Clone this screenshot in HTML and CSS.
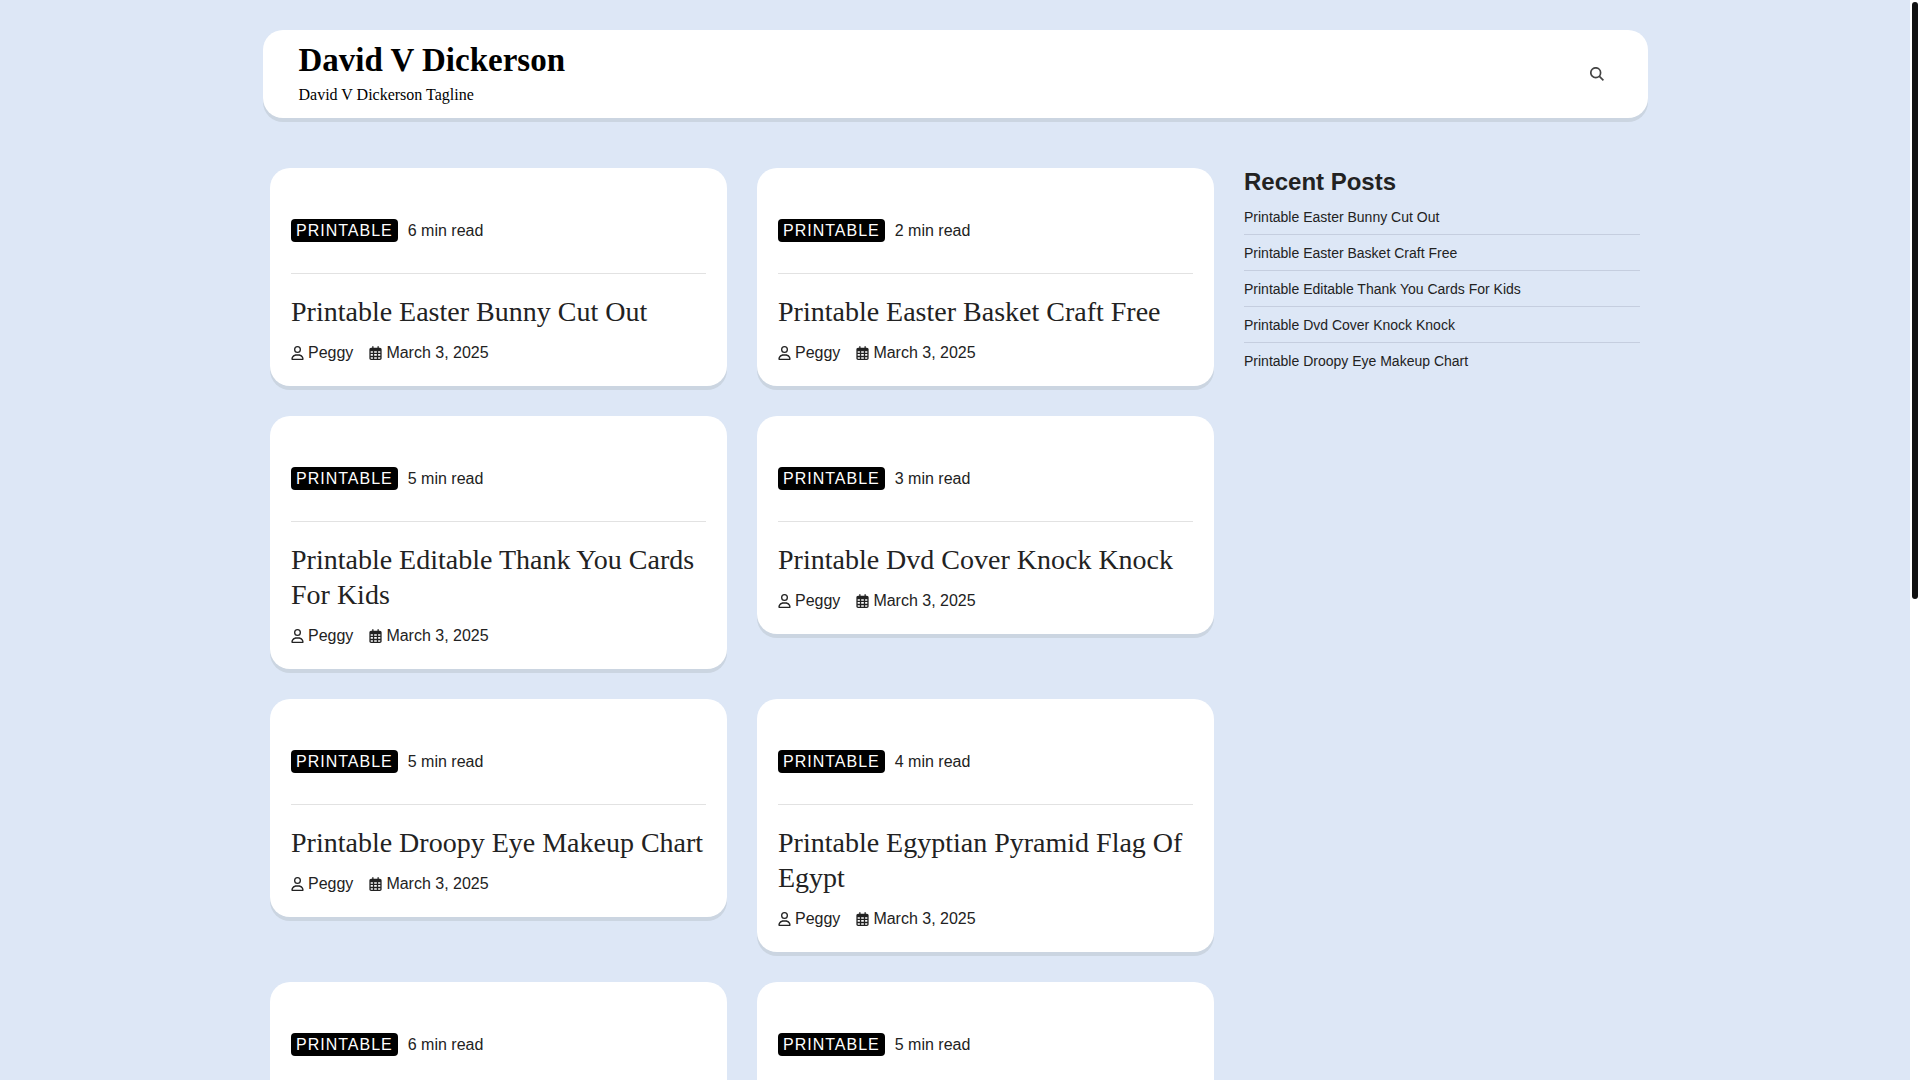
FILE: index.html
```
<!DOCTYPE html>
<html lang="en">
<head>
<meta charset="utf-8">
<meta name="viewport" content="width=device-width, initial-scale=1">
<title>David V Dickerson</title>
<link rel="stylesheet" href="styles.css">
</head>
<body>
<svg class="sprite" aria-hidden="true">
  <symbol id="user" viewBox="0 0 448 512"><path d="M304 128a80 80 0 1 0-160 0 80 80 0 1 0 160 0zM96 128a128 128 0 1 1 256 0A128 128 0 1 1 96 128zM49.3 464H398.7c-8.9-63.3-63.3-112-129-112H178.3c-65.7 0-120.1 48.7-129 112zM0 482.3C0 383.8 79.8 304 178.3 304h91.4C368.2 304 448 383.8 448 482.3c0 16.4-13.3 29.7-29.7 29.7H29.7C13.3 512 0 498.7 0 482.3z"/></symbol>
  <symbol id="calendar" viewBox="0 0 448 512"><path d="M152 24c0-13.3-10.7-24-24-24s-24 10.7-24 24V64H64C28.7 64 0 92.7 0 128v16 48V448c0 35.3 28.7 64 64 64H384c35.3 0 64-28.7 64-64V192 144 128c0-35.3-28.7-64-64-64H344V24c0-13.3-10.7-24-24-24s-24 10.7-24 24V64H152V24zM48 192h80v56H48V192zm0 104h80v64H48V296zm128 0h96v64H176V296zm144 0h80v64H320V296zm80-48H320V192h80v56zm0 160v40c0 8.8-7.2 16-16 16H320V408h80zm-128 0v56H176V408h96zm-144 0v56H64c-8.8 0-16-7.2-16-16V408h80zM272 248H176V192h96v56z"/></symbol>
</svg>
<div class="viewport">
  <div class="page">
    <header class="site-header">
      <div class="branding">
        <h1 class="site-title"><a href="#">David V Dickerson</a></h1>
        <p class="tagline">David V Dickerson Tagline</p>
      </div>
      <button class="search" type="button" aria-label="Search">
        <svg viewBox="0 0 14 14" width="14" height="14"><circle cx="5.7" cy="5.7" r="4.9"/><path d="M9.2 9.2l4.2 4.2"/></svg>
      </button>
    </header>
    <div class="content">
      <main class="posts">
        <article class="card">
          <div class="card-top"><a class="badge" href="#">PRINTABLE</a><span>6 min read</span></div>
          <h2 class="card-title"><a href="#">Printable Easter Bunny Cut Out</a></h2>
          <div class="meta"><a href="#"><svg><use href="#user"/></svg>Peggy</a><a href="#"><svg><use href="#calendar"/></svg>March 3, 2025</a></div>
        </article>
        <article class="card">
          <div class="card-top"><a class="badge" href="#">PRINTABLE</a><span>2 min read</span></div>
          <h2 class="card-title"><a href="#">Printable Easter Basket Craft Free</a></h2>
          <div class="meta"><a href="#"><svg><use href="#user"/></svg>Peggy</a><a href="#"><svg><use href="#calendar"/></svg>March 3, 2025</a></div>
        </article>
        <article class="card">
          <div class="card-top"><a class="badge" href="#">PRINTABLE</a><span>5 min read</span></div>
          <h2 class="card-title"><a href="#">Printable Editable Thank You Cards For Kids</a></h2>
          <div class="meta"><a href="#"><svg><use href="#user"/></svg>Peggy</a><a href="#"><svg><use href="#calendar"/></svg>March 3, 2025</a></div>
        </article>
        <article class="card">
          <div class="card-top"><a class="badge" href="#">PRINTABLE</a><span>3 min read</span></div>
          <h2 class="card-title"><a href="#">Printable Dvd Cover Knock Knock</a></h2>
          <div class="meta"><a href="#"><svg><use href="#user"/></svg>Peggy</a><a href="#"><svg><use href="#calendar"/></svg>March 3, 2025</a></div>
        </article>
        <article class="card">
          <div class="card-top"><a class="badge" href="#">PRINTABLE</a><span>5 min read</span></div>
          <h2 class="card-title"><a href="#">Printable Droopy Eye Makeup Chart</a></h2>
          <div class="meta"><a href="#"><svg><use href="#user"/></svg>Peggy</a><a href="#"><svg><use href="#calendar"/></svg>March 3, 2025</a></div>
        </article>
        <article class="card">
          <div class="card-top"><a class="badge" href="#">PRINTABLE</a><span>4 min read</span></div>
          <h2 class="card-title"><a href="#">Printable Egyptian Pyramid Flag Of Egypt</a></h2>
          <div class="meta"><a href="#"><svg><use href="#user"/></svg>Peggy</a><a href="#"><svg><use href="#calendar"/></svg>March 3, 2025</a></div>
        </article>
        <article class="card">
          <div class="card-top"><a class="badge" href="#">PRINTABLE</a><span>6 min read</span></div>
        </article>
        <article class="card">
          <div class="card-top"><a class="badge" href="#">PRINTABLE</a><span>5 min read</span></div>
        </article>
      </main>
      <aside class="sidebar">
        <h2 class="widget-title">Recent Posts</h2>
        <ul class="recent">
          <li><a href="#">Printable Easter Bunny Cut Out</a></li>
          <li><a href="#">Printable Easter Basket Craft Free</a></li>
          <li><a href="#">Printable Editable Thank You Cards For Kids</a></li>
          <li><a href="#">Printable Dvd Cover Knock Knock</a></li>
          <li><a href="#">Printable Droopy Eye Makeup Chart</a></li>
        </ul>
      </aside>
    </div>
  </div>
  <div class="scroll-track" aria-hidden="true"><div class="scroll-thumb"></div></div>
</div>
</body>
</html>
```
FILE: styles.css
```
* {
  box-sizing: border-box;
}

body {
  margin: 0;
  background: #dde7f6;
  color: #222;
  font: 16px/24px "Liberation Sans", Arial, sans-serif;
}

h1, h2, p, ul {
  margin: 0;
  padding: 0;
}

a {
  color: inherit;
  text-decoration: none;
}

.sprite {
  display: none;
}

.viewport {
  display: grid;
  grid-template-columns: minmax(0, 1fr) 10px;
  height: 100vh;
}

.page {
  overflow-y: auto;
  scrollbar-width: none;
  padding: 30px 24px;
}

.scroll-track {
  padding: 2px;
  background: #fff;
}

.scroll-thumb {
  height: 55.5%;
  border-radius: 3px;
  background: #111;
}

.site-header {
  display: flex;
  align-items: center;
  justify-content: space-between;
  max-width: 1385px;
  margin: 0 auto 50px;
  padding: 10px 36px;
  border-radius: 20px;
  background: #fff;
  box-shadow: 0 4px 0 #cbd5e1;
  color: #000;
  font-family: "Liberation Serif", "Times New Roman", serif;
}

.site-title {
  font-size: 33px;
  line-height: 40px;
}

.tagline {
  padding-top: 2px;
  line-height: 26px;
}

.search {
  display: flex;
  padding: 8px;
  border: 0;
  background: none;
}

.search svg {
  fill: none;
  stroke: #444;
  stroke-width: 1.7;
}

.content {
  display: grid;
  grid-template-columns: minmax(0, 944fr) minmax(0, 396fr);
  gap: 30px;
  max-width: 1370px;
  margin: 0 auto;
}

.posts {
  display: grid;
  grid-template-columns: repeat(2, minmax(0, 1fr));
  align-items: start;
  gap: 30px;
}

.card {
  padding: 50px 21px 21px;
  border-radius: 20px;
  background: #fff;
  box-shadow: 0 4px 0 #cbd5e1;
}

.card-top {
  display: flex;
  align-items: center;
  gap: 10px;
  padding-bottom: 30px;
  border-bottom: 1px solid #e2e2e2;
}

.card-top span {
  line-height: 25px;
}

.badge {
  padding: 0 5px;
  border-radius: 4px;
  background: #000;
  color: #fff;
  line-height: 23px;
  letter-spacing: 1px;
}

.card-title {
  margin: 20px 0 12px;
  font: 28px/35px "Liberation Serif", "Times New Roman", serif;
}

.meta {
  display: flex;
  gap: 16px;
}

.meta a {
  display: flex;
  align-items: center;
  gap: 4px;
}

.meta svg {
  width: 13px;
  height: 14px;
  fill: #222;
}

.widget-title {
  margin-bottom: 3px;
  font-size: 24px;
  line-height: 28px;
}

.recent {
  font-size: 14px;
  list-style: none;
}

.recent li {
  padding: 8px 0 7px;
  line-height: 20px;
  border-bottom: 1px solid #c5cedf;
}

.recent li:last-child {
  border-bottom: 0;
}

@media (max-width: 900px) {
  .content,
  .posts {
    grid-template-columns: minmax(0, 1fr);
  }
}
```
